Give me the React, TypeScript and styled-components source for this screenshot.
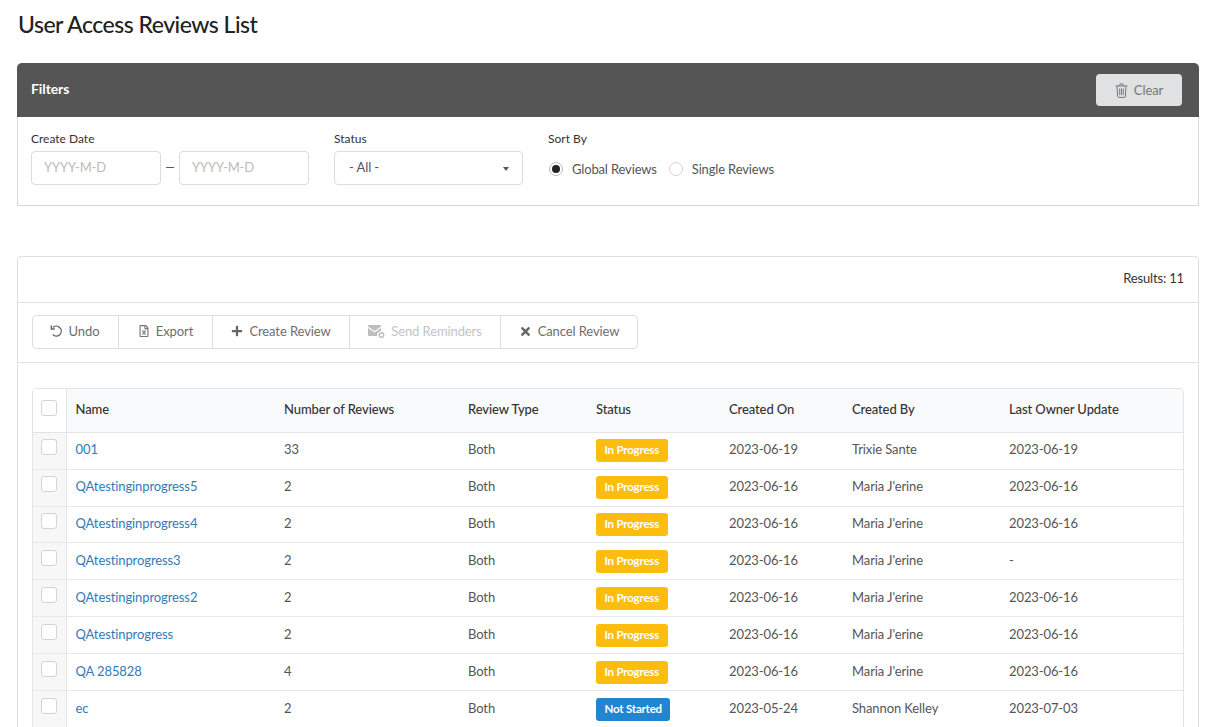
import React from "react";
import styled, { createGlobalStyle } from "styled-components";
import { FaPlus, FaTimes, FaRegFileExcel } from "react-icons/fa";

const Global = createGlobalStyle`
  html, body { margin: 0; padding: 0; background: #fff; overflow: hidden; }
  body { font-family: Lato, "Open Sans", sans-serif; color: #333; letter-spacing: -0.1px; }
  * { box-sizing: border-box; }
`;

const Page = styled.div`
  height: 727px;
  overflow: hidden;
  padding: 0 14px 0 17px;
`;
const Title = styled.h1`
  margin: 0;
  height: 63px;
  padding: 9px 0 0 1px;
  font-size: 23px;
  line-height: 30px;
  font-weight: 500;
  color: #222;
  letter-spacing: -0.5px;
`;
const FilterCard = styled.section`
  height: 143px;
  border: 1px solid #d8d8d8;
  border-top: 0;
  border-radius: 5px 5px 0 0;
  margin-bottom: 50px;
`;
const FilterHeader = styled.header`
  height: 54px;
  margin: 0 -1px;
  padding: 0 17px 0 14px;
  background: #555;
  border-radius: 5px 5px 0 0;
  display: flex;
  align-items: center;
  justify-content: space-between;
`;
const FilterTitle = styled.span`
  color: #fff;
  font-size: 14px;
  font-weight: 700;
  padding-bottom: 3px;
`;
const ClearButton = styled.button`
  width: 86px;
  height: 32px;
  border: 0;
  border-radius: 4px;
  background: #e0e1e2;
  color: #777;
  font: 400 13px Lato, sans-serif;
  letter-spacing: -0.1px;
  display: flex;
  align-items: center;
  justify-content: center;
  gap: 6px;
`;
const FilterBody = styled.div`
  display: flex;
  padding: 15px 13px 0;
`;
const Field = styled.div<{ $w: number }>`
  width: ${(p) => p.$w}px;
  flex: none;
`;
const Label = styled.div`
  font-size: 12px;
  line-height: 14px;
  letter-spacing: 0;
  color: #333;
  margin-bottom: 5px;
`;
const DateRow = styled.div`
  display: flex;
  align-items: center;
`;
const DateBox = styled.div`
  width: 130px;
  height: 34px;
  border: 1px solid #dcdcdc;
  border-radius: 4px;
  padding: 0 12px 2px;
  display: flex;
  align-items: center;
  color: #bbb;
  font-size: 13px;
  letter-spacing: -0.15px;
`;
const Dash = styled.span`
  width: 18px;
  text-align: center;
  font-size: 12px;
  line-height: 12px;
  color: #333;
  padding-bottom: 2px;
`;
const SelectBox = styled.div`
  width: 189px;
  height: 34px;
  border: 1px solid #dcdcdc;
  border-radius: 4px;
  padding: 0 14px 2px;
  display: flex;
  align-items: center;
  justify-content: space-between;
  font-size: 13px;
  color: #555;
`;
const Caret = styled.span`
  width: 0;
  height: 0;
  border: 3.5px solid transparent;
  border-top: 4px solid #555;
  border-bottom: 0;
  margin: 3px -1px 0 0;
`;
const RadioRow = styled.div`
  display: flex;
  align-items: center;
  height: 34px;
  padding-top: 1px;
  font-size: 13px;
  letter-spacing: -0.15px;
  color: #555;
`;
const Radio = styled.span<{ $on?: boolean }>`
  width: 14px;
  height: 14px;
  border-radius: 50%;
  border: 1px solid ${(p) => (p.$on ? "#bbb" : "#d4d4d4")};
  margin: 0 9px 0 1px;
  display: flex;
  align-items: center;
  justify-content: center;
  &::after {
    content: "";
    width: 8px;
    height: 8px;
    border-radius: 50%;
    background: ${(p) => (p.$on ? "#222" : "transparent")};
  }
`;
const RadioText = styled.span`
  margin-right: 11px;
`;
const ListCard = styled.section`
  border: 1px solid #dedede;
  border-radius: 4px 4px 0 0;
  height: 600px;
`;
const ResultsBar = styled.div`
  height: 46px;
  border-bottom: 1px solid #e4e4e4;
  padding: 0 14px 4px;
  display: flex;
  align-items: center;
  justify-content: flex-end;
  font-size: 13px;
  letter-spacing: -0.15px;
  color: #333;
`;
const ToolbarRow = styled.div`
  height: 60px;
  border-bottom: 1px solid #e4e4e4;
  padding: 12px 14px 0;
`;
const ButtonGroup = styled.div`
  display: inline-flex;
  height: 34px;
  border: 1px solid #dedede;
  border-radius: 4px;
`;
const ToolButton = styled.div<{ $w: number; $off?: boolean }>`
  width: ${(p) => p.$w}px;
  padding-bottom: 2px;
  display: flex;
  align-items: center;
  justify-content: center;
  gap: 6px;
  font-size: 13px;
  color: ${(p) => (p.$off ? "#c4c4c4" : "#6e6e6e")};
  & + & { border-left: 1px solid #dedede; }
  &:first-child { padding-right: 2px; }
`;
const TableWrap = styled.div`
  margin: 25px 14px 0;
  border: 1px solid #e4e4e4;
  border-radius: 4px 4px 0 0;
`;
const Table = styled.table`
  width: 100%;
  table-layout: fixed;
  border-collapse: collapse;
  font-size: 13px;
`;
const Th = styled.th`
  height: 43px;
  padding: 0 9px 3px;
  text-align: left;
  font-weight: 500;
  font-size: 13px;
  color: #333;
  background: #f9fafb;
  border-bottom: 1px solid #e4e4e4;
`;
const CheckTh = styled.th`
  height: 43px;
  padding: 0 0 4px 8px;
  text-align: left;
  background: #fff;
  border-right: 1px solid #e4e4e4;
  border-bottom: 1px solid #e4e4e4;
`;
const Row = styled.tr`
  --row-h: 37px;
  --short: 0px;
  --shift: 0px;
  &:nth-child(3) {
    --row-h: 36px;
    --short: 1px;
  }
  &:nth-child(n + 4) {
    --shift: 2px;
  }
`;
const Td = styled.td`
  height: var(--row-h);
  padding: var(--shift) 9px calc(4px - var(--short));
  color: #555;
  border-bottom: 1px solid #e8e8e8;
`;
const StatusTd = styled.td`
  height: var(--row-h);
  padding: calc(var(--shift) + var(--short)) 9px 0;
  border-bottom: 1px solid #e8e8e8;
`;
const CheckTd = styled.td`
  height: var(--row-h);
  padding: var(--shift) 0 calc(8px - var(--short)) 8px;
  background: #f7f7f7;
  border-right: 1px solid #e4e4e4;
  border-bottom: 1px solid #e8e8e8;
`;
const Check = styled.span`
  display: block;
  width: 16px;
  height: 16px;
  border: 1px solid #d4d4d4;
  border-radius: 3px;
  background: #fff;
`;
const NameLink = styled.a`
  color: #337ab7;
  text-decoration: none;
`;
const Badge = styled.span<{ $kind: "progress" | "new" }>`
  display: flex;
  width: fit-content;
  align-items: center;
  height: 23px;
  padding: 0 8.5px 3px;
  border-radius: 3px;
  font-size: 11.5px;
  font-weight: 700;
  color: #fff;
  letter-spacing: -0.2px;
  background: ${(p) => (p.$kind === "progress" ? "#fdbd0f" : "#2185d0")};
`;

const TrashIcon = () => (
  <svg width="13" height="15" viewBox="0 0 13 15" fill="none" stroke="#777" strokeWidth="1">
    <path d="M0.5 3h12M2 3l.6 10.2c0 .7.5 1.2 1.2 1.2h5.4c.7 0 1.2-.5 1.2-1.2L11 3M4.5 3l.5-2h3l.5 2M4.7 5.5v6.5M6.5 5.5v6.5M8.3 5.5v6.5" />
  </svg>
);
const UndoIcon = () => (
  <svg width="13" height="14" viewBox="0 0 14 14" fill="none" stroke="#666" strokeWidth="1.5">
    <path d="M3.2 3.2A5.3 5.3 0 1 1 3 10.8" />
    <path d="M1.4 1v3.8h3.8" strokeLinejoin="miter" />
  </svg>
);
const MailGearIcon = () => (
  <svg width="17" height="13" viewBox="0 0 17 13">
    <path d="M0 1.5 6.5 6 13 1.5V1c0-.5-.4-1-1-1H1C.4 0 0 .5 0 1zM0 3v7c0 .6.4 1 1 1h8.2a4 4 0 0 1 3.8-5V3L6.5 7.5z" fill="#bdbdbd" />
    <circle cx="13.5" cy="10" r="2.2" fill="none" stroke="#bdbdbd" strokeWidth="1.4" />
  </svg>
);

const rows: [string, string, string, "progress" | "new", string, string, string][] = [
  ["001", "33", "In Progress", "progress", "2023-06-19", "Trixie Sante", "2023-06-19"],
  ["QAtestinginprogress5", "2", "In Progress", "progress", "2023-06-16", "Maria J'erine", "2023-06-16"],
  ["QAtestinginprogress4", "2", "In Progress", "progress", "2023-06-16", "Maria J'erine", "2023-06-16"],
  ["QAtestinprogress3", "2", "In Progress", "progress", "2023-06-16", "Maria J'erine", "-"],
  ["QAtestinginprogress2", "2", "In Progress", "progress", "2023-06-16", "Maria J'erine", "2023-06-16"],
  ["QAtestinprogress", "2", "In Progress", "progress", "2023-06-16", "Maria J'erine", "2023-06-16"],
  ["QA 285828", "4", "In Progress", "progress", "2023-06-16", "Maria J'erine", "2023-06-16"],
  ["ec", "2", "Not Started", "new", "2023-05-24", "Shannon Kelley", "2023-07-03"],
];

export default function App() {
  return (
    <Page>
      <Global />
      <Title>User Access Reviews List</Title>
      <FilterCard>
        <FilterHeader>
          <FilterTitle>Filters</FilterTitle>
          <ClearButton>
            <TrashIcon />
            Clear
          </ClearButton>
        </FilterHeader>
        <FilterBody>
          <Field $w={303}>
            <Label>Create Date</Label>
            <DateRow>
              <DateBox>YYYY-M-D</DateBox>
              <Dash>—</Dash>
              <DateBox>YYYY-M-D</DateBox>
            </DateRow>
          </Field>
          <Field $w={214}>
            <Label>Status</Label>
            <SelectBox>
              - All -
              <Caret />
            </SelectBox>
          </Field>
          <Field $w={300}>
            <Label>Sort By</Label>
            <RadioRow>
              <Radio $on />
              <RadioText>Global Reviews</RadioText>
              <Radio />
              <RadioText>Single Reviews</RadioText>
            </RadioRow>
          </Field>
        </FilterBody>
      </FilterCard>
      <ListCard>
        <ResultsBar>Results: 11</ResultsBar>
        <ToolbarRow>
          <ButtonGroup>
            <ToolButton $w={85}>
              <UndoIcon />
              Undo
            </ToolButton>
            <ToolButton $w={94}>
              <FaRegFileExcel size={12} color="#777" />
              Export
            </ToolButton>
            <ToolButton $w={137}>
              <FaPlus size={12} color="#666" />
              Create Review
            </ToolButton>
            <ToolButton $w={151} $off>
              <MailGearIcon />
              Send Reminders
            </ToolButton>
            <ToolButton $w={137}>
              <FaTimes size={13} color="#666" />
              Cancel Review
            </ToolButton>
          </ButtonGroup>
        </ToolbarRow>
        <TableWrap>
          <Table>
            <colgroup>
              <col style={{ width: 33 }} />
              <col style={{ width: 209 }} />
              <col style={{ width: 184 }} />
              <col style={{ width: 128 }} />
              <col style={{ width: 133 }} />
              <col style={{ width: 123 }} />
              <col style={{ width: 157 }} />
              <col />
            </colgroup>
            <thead>
              <tr>
                <CheckTh>
                  <Check />
                </CheckTh>
                <Th>Name</Th>
                <Th>Number of Reviews</Th>
                <Th>Review Type</Th>
                <Th>Status</Th>
                <Th>Created On</Th>
                <Th>Created By</Th>
                <Th>Last Owner Update</Th>
              </tr>
            </thead>
            <tbody>
              {rows.map((r) => (
                <Row key={r[0]}>
                  <CheckTd>
                    <Check />
                  </CheckTd>
                  <Td>
                    <NameLink href="#">{r[0]}</NameLink>
                  </Td>
                  <Td>{r[1]}</Td>
                  <Td>Both</Td>
                  <StatusTd>
                    <Badge $kind={r[3]}>{r[2]}</Badge>
                  </StatusTd>
                  <Td>{r[4]}</Td>
                  <Td>{r[5]}</Td>
                  <Td>{r[6]}</Td>
                </Row>
              ))}
            </tbody>
          </Table>
        </TableWrap>
      </ListCard>
    </Page>
  );
}
